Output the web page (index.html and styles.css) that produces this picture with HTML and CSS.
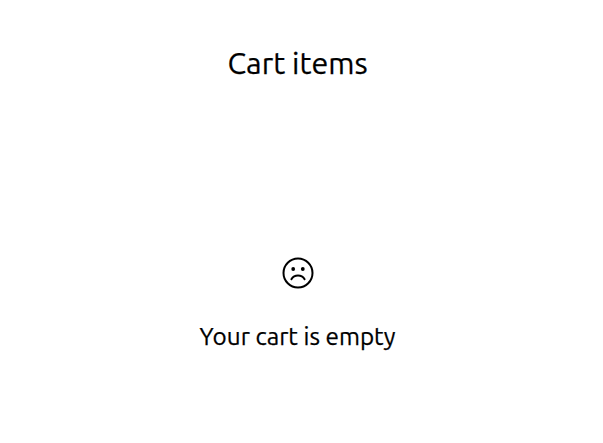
FILE: index.html
```html
<!DOCTYPE html>
<html lang="en">
<head>
<meta charset="utf-8">
<title>Cart items</title>
<link rel="stylesheet" href="styles.css">
</head>
<body>
<main class="cart">
  <h1 class="cart-title">Cart items</h1>
  <section class="empty">
    <svg class="empty-icon" viewBox="0 0 32 32" fill="none" stroke="currentColor" stroke-width="2" aria-hidden="true">
      <circle cx="16" cy="16" r="14.5"/>
      <path d="M9.4 22.2a7.7 7.7 0 0 1 13.2 0" stroke-linecap="round"/>
      <circle class="eye" cx="11.2" cy="12" r="1.9"/>
      <circle class="eye" cx="20.8" cy="12" r="1.9"/>
    </svg>
    <p class="empty-text">Your cart is empty</p>
  </section>
</main>
</body>
</html>
```

FILE: styles.css
```css
body {
  margin: 0;
  background: #fff;
  color: #000;
  font-family: Ubuntu, "Noto Sans", sans-serif;
}
.cart {
  width: 596px;
  padding-top: 43px;
  text-align: center;
}
.cart-title {
  margin: 0 1px 0 0;
  font-size: 30.4px;
  font-weight: 400;
  line-height: 40px;
  -webkit-text-stroke: 0.25px currentColor;
}
.empty {
  display: flex;
  flex-direction: column;
  align-items: center;
  margin-top: 174px;
}
.empty-icon {
  width: 32px;
  height: 32px;
}
.eye {
  fill: currentColor;
  stroke: none;
}
.empty-text {
  margin: 29px 1px 0 0;
  font-size: 24.3px;
  line-height: 36px;
  -webkit-text-stroke: 0.25px currentColor;
}
```
